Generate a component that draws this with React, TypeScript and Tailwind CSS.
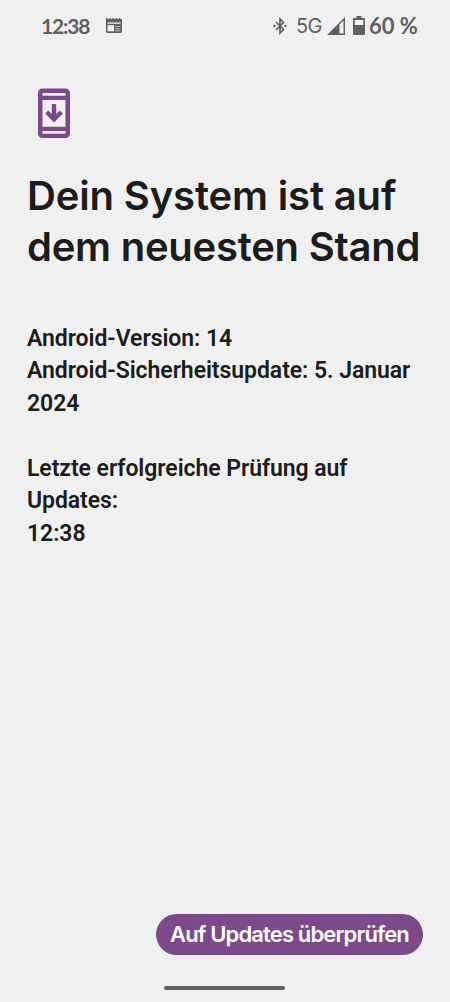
function CalendarIcon() {
  return (
    <svg className="ml-[16px] h-[15px] w-[16px]" viewBox="0 0 16 15" fill="#606060">
      <path d="M0 0h1.500v1h1.700V0h1.500v1h1.700V0h1.500v1h1.700V0h1.500v1h1.700V0h1.500v1h1.700V0H16v13.500a1.500 1.500 0 0 1-1.500 1.500h-13A1.500 1.500 0 0 1 0 13.500z" />
      <path d="M1.500 4.500h13v1.200h-13zM1.500 7.200H8v6.100H1.500z" fill="#f0f0f0" />
      <path d="M9 8h5.500v1H9zM9 10.200h5.500v1H9zM9 12.300h5.500v1H9z" fill="#b0b0b0" />
    </svg>
  );
}

function BluetoothIcon() {
  return (
    <svg className="h-[18px] w-[14px]" viewBox="0 0 14 18" fill="none" stroke="#606060" strokeWidth="1.700">
      <path d="M3 5l7.500 7.500L7 16V2l3.500 3.500L3 13" />
      <circle cx="1.300" cy="9" r="1.200" fill="#606060" stroke="none" />
      <circle cx="12.500" cy="9" r="1.200" fill="#606060" stroke="none" />
    </svg>
  );
}

function SignalIcon() {
  return (
    <svg className="ml-[5px] h-[18px] w-[18px]" viewBox="0 0 18 18" fill="#606060">
      <path fillRule="evenodd" d="M18 0v18H0zM12.500 7.500v9h4v-13z" />
    </svg>
  );
}

function BatteryIcon() {
  return (
    <svg className="ml-[8px] h-[19px] w-[12px]" viewBox="0 0 12 19" fill="#606060">
      <path fillRule="evenodd" d="M3.500 0h5v2H11a1 1 0 0 1 1 1v15a1 1 0 0 1-1 1H1a1 1 0 0 1-1-1V3a1 1 0 0 1 1-1h2.500zM1.700 4v5h8.600V4z" />
    </svg>
  );
}

function PhoneUpdateIcon() {
  return (
    <svg className="ml-[11px] h-[50px] w-[32px]" viewBox="0 -0.5 32 50">
      <path
        fill="#7c4a8a"
        fillRule="evenodd"
        d="M4.500 0h23A4.500 4.500 0 0 1 32 4.500v40.500a4.500 4.500 0 0 1-4.500 4.500h-23A4.500 4.500 0 0 1 0 45v-40.500A4.500 4.500 0 0 1 4.500 0zM4.500 4.500v2.700h23V4.500zM4.500 11.500v26.800h23V11.500zM4.500 42.500v2.700h23V42.500z"
      />
      <path d="M16 15.500v15M8.700 23.500l7.300 7.300 7.300-7.300" fill="none" stroke="#7c4a8a" strokeWidth="4.400" />
    </svg>
  );
}

export default function App() {
  return (
    <main className="flex h-[1002px] w-[450px] flex-col overflow-hidden bg-[#f0f0f0] font-['Roboto',sans-serif] text-[#1c1c1c]">
      <header className="flex h-[51px] items-center pl-[41px] font-['Lato',sans-serif] text-[#606060]">
        <span className="w-[49px] whitespace-nowrap text-[21px] leading-[24px] font-bold tracking-[-1.200px]">12:38</span>
        <CalendarIcon />
        <div className="ml-[151px] flex items-center whitespace-nowrap">
          <BluetoothIcon />
          <span className="ml-[9px] w-[26px] font-['Inter',sans-serif] text-[20px] leading-[24px] tracking-[-0.7px]">5G</span>
          <SignalIcon />
          <BatteryIcon />
          <span className="ml-[4px] text-[22px] leading-[24px] font-bold">60 %</span>
        </div>
      </header>

      <section className="flex flex-col px-[27px] pt-[37px]">
        <PhoneUpdateIcon />
        <h1 className="mt-[32px] whitespace-nowrap font-['Inter',sans-serif] text-[40px] leading-[51px] font-semibold">
          <span className="block tracking-[-0.150px]">Dein System ist auf</span>
          <span className="block tracking-[-0.250px]">dem neuesten Stand</span>
        </h1>
        <div className="mt-[50.5px] whitespace-nowrap text-[23px] leading-[32.5px] font-semibold tracking-[-0.060px]">
          <p>Android-Version: 14</p>
          <p>Android-Sicherheitsupdate: 5. Januar</p>
          <p>2024</p>
          <p className="mt-[32.5px]">Letzte erfolgreiche Prüfung auf</p>
          <p>Updates:</p>
          <p>12:38</p>
        </div>
      </section>

      <footer className="mt-auto flex flex-col items-end pr-[27px] pb-[12px]">
        <button className="flex h-[41px] w-[267px] items-center justify-center rounded-full bg-[#7c4a8a] font-['Inter',sans-serif] text-[22px] font-semibold tracking-[-0.850px] whitespace-nowrap text-white">
          Auf Updates überprüfen
        </button>
        <div className="mt-[31px] mr-[138px] h-[4px] w-[121px] rounded-full bg-[#606060]" />
      </footer>
    </main>
  );
}
